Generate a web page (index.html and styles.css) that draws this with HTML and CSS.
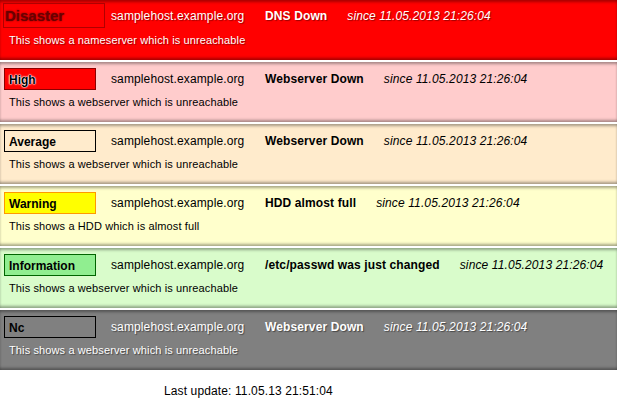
FILE: index.html
```html
<!DOCTYPE html>
<html>
<head>
<meta charset="utf-8">
<link rel="stylesheet" href="styles.css">
</head>
<body>
<div class="list">
  <div class="panel disaster">
    <div class="head">
      <span class="sev">Disaster</span>
      <span class="host">samplehost.example.org</span>
      <span class="title">DNS Down</span>
      <span class="since">since 11.05.2013 21:26:04</span>
    </div>
    <div class="desc">This shows a nameserver which is unreachable</div>
  </div>
  <div class="panel high">
    <div class="head">
      <span class="sev">High</span>
      <span class="host">samplehost.example.org</span>
      <span class="title">Webserver Down</span>
      <span class="since">since 11.05.2013 21:26:04</span>
    </div>
    <div class="desc">This shows a webserver which is unreachable</div>
  </div>
  <div class="panel average">
    <div class="head">
      <span class="sev">Average</span>
      <span class="host">samplehost.example.org</span>
      <span class="title">Webserver Down</span>
      <span class="since">since 11.05.2013 21:26:04</span>
    </div>
    <div class="desc">This shows a webserver which is unreachable</div>
  </div>
  <div class="panel warning">
    <div class="head">
      <span class="sev">Warning</span>
      <span class="host">samplehost.example.org</span>
      <span class="title">HDD almost full</span>
      <span class="since">since 11.05.2013 21:26:04</span>
    </div>
    <div class="desc">This shows a HDD which is almost full</div>
  </div>
  <div class="panel info">
    <div class="head">
      <span class="sev">Information</span>
      <span class="host">samplehost.example.org</span>
      <span class="title">/etc/passwd was just changed</span>
      <span class="since">since 11.05.2013 21:26:04</span>
    </div>
    <div class="desc">This shows a webserver which is unreachable</div>
  </div>
  <div class="panel nc">
    <div class="head">
      <span class="sev">Nc</span>
      <span class="host">samplehost.example.org</span>
      <span class="title">Webserver Down</span>
      <span class="since">since 11.05.2013 21:26:04</span>
    </div>
    <div class="desc">This shows a webserver which is unreachable</div>
  </div>
</div>
<div class="footer">Last update: 11.05.13 21:51:04</div>
</body>
</html>
```

FILE: styles.css
```css
html, body {
  margin: 0;
  padding: 0;
  background: #fff;
}
body {
  font-family: "Liberation Sans", Arial, Helvetica, sans-serif;
  font-size: 12px;
  letter-spacing: 0.12px;
  color: #000;
}
.list {
  display: flex;
  flex-direction: column;
  gap: 2px;
}
.panel {
  height: 60px;
  box-sizing: border-box;
  display: flex;
  flex-direction: column;
  box-shadow: inset 0 3px 3px -1px rgba(0,0,0,0.35), inset 0 -3px 3px -1px rgba(0,0,0,0.35);
}
.head {
  display: flex;
  align-items: center;
  height: 23px;
  margin-top: 5px;
  padding-left: 4px;
}
.sev {
  box-sizing: border-box;
  width: 92px;
  height: 22px;
  border: 1px solid #000;
  font-weight: bold;
  font-size: 12px;
  padding: 4px 0 0 4px;
  margin-right: 15px;
  line-height: 14px;
  letter-spacing: 0;
}
.host {
  width: 154px;
  flex: none;
}
.title {
  font-weight: bold;
  margin-right: 20px;
}
.since {
  font-style: italic;
}
.desc {
  font-size: 11px;
  padding-left: 9px;
  margin-top: 6px;
}

.disaster { background: #ff0000; color: #fff; }
.disaster .head { margin-top: 3px; padding-left: 3px; height: 25px; }
.disaster .sev {
  width: 102px;
  height: 25px;
  border-color: #b00000;
  color: #6a0000;
  font-size: 15px;
  padding: 5px 0 0 1px;
  margin-right: 6px;
  text-shadow: 0 0 2px rgba(80,0,0,0.8);
}
.disaster .host, .disaster .title, .disaster .since, .disaster .desc {
  text-shadow: 1px 1px 1px rgba(90,0,0,0.6);
}

.high { background: #ffcccc; }
.high .sev {
  background: #ff0000;
  border-color: #8b0000;
  text-shadow: 0 0 1px #fff, 0 0 1px #fff, 0 0 2px #fff, 0 0 2px #fff;
}

.average { background: #ffebcc; }

.warning { background: #ffffcc; }
.warning .sev {
  background: #ffff00;
  border-color: #ff9900;
}

.info { background: #d9fccb; }
.info .sev {
  background: #90ee90;
  border-color: #006400;
}

.nc { background: #808080; color: #fff; }
.nc .sev { color: #000; text-shadow: none; }
.nc .host, .nc .title, .nc .since, .nc .desc {
  text-shadow: 1px 1px 1px rgba(0,0,0,0.45);
}

.footer {
  padding: 14px 0 0 164px;
  font-size: 12px;
}
```
